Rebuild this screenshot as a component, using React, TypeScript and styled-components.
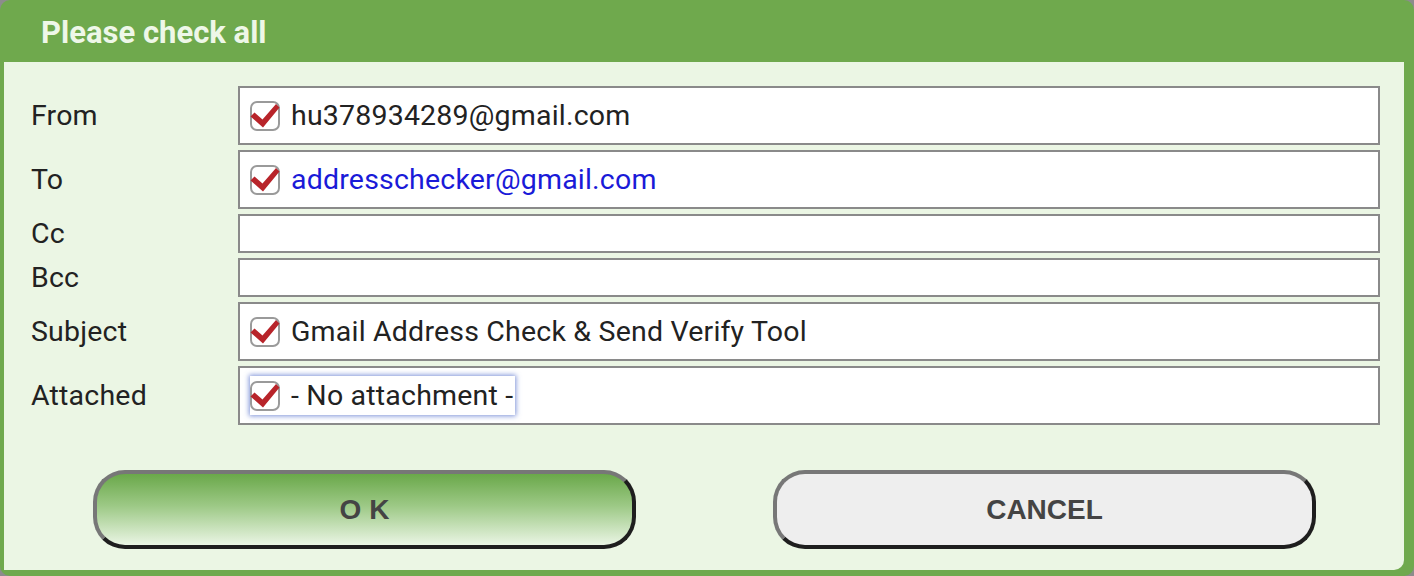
import React from 'react';
import styled, { createGlobalStyle } from 'styled-components';

const GlobalStyle = createGlobalStyle`
  html, body {
    margin: 0;
    padding: 0;
    background: #8c8c8c;
  }
  body {
    font-family: Roboto, "Liberation Sans", Arial, sans-serif;
  }
`;

const Dialog = styled.div`
  width: 1414px;
  height: 576px;
  box-sizing: border-box;
  display: flex;
  flex-direction: column;
  background: #6fa94d;
  border-radius: 10px;
  padding: 0 10px 6px 4px;
`;

const Header = styled.div`
  height: 62px;
  box-sizing: border-box;
  padding: 4px 0 0 37px;
  line-height: 58px;
  font-size: 31px;
  font-weight: 700;
  color: #eef7e8;
`;

const Panel = styled.div`
  flex: 1;
  display: flex;
  flex-direction: column;
  background: #ebf6e4;
  border-bottom-right-radius: 10px;
  padding: 24px 24px 0 27px;
`;

const Fields = styled.div`
  display: grid;
  grid-template-columns: 207px 1fr;
  row-gap: 5px;
  align-items: center;
`;

const Label = styled.div`
  font-size: 28.5px;
  letter-spacing: 0.2px;
  color: #222;
`;

// one bordered field, tall when it holds a checkbox
const Field = styled.div<{ $tall?: boolean }>`
  height: ${(p) => (p.$tall ? 59 : 39)}px;
  box-sizing: border-box;
  border: 2px solid #8a8a8a;
  background: #fff;
  display: flex;
  align-items: center;
  padding-left: 10px;
`;

const Value = styled.span<{ $blue?: boolean; $focused?: boolean }>`
  display: inline-flex;
  align-items: center;
  gap: 11px;
  font-size: 28.5px;
  letter-spacing: 0.2px;
  color: ${(p) => (p.$blue ? '#1a1ad8' : '#222')};
  padding: ${(p) => (p.$focused ? '3px 2px 3px 0' : '0')};
  box-shadow: ${(p) => (p.$focused ? '0 0 5px 1px rgba(70, 100, 200, 0.7)' : 'none')};
`;

const Buttons = styled.div`
  display: grid;
  grid-template-columns: 1fr 1fr;
  column-gap: 137px;
  padding: 0 64px 0 62px;
  margin-top: 45px;
`;

const Button = styled.button<{ $primary?: boolean }>`
  height: 79px;
  box-sizing: border-box;
  border: 4px solid;
  border-color: #777 #1e1e1e #1e1e1e #777;
  border-radius: 32px;
  background: ${(p) =>
    p.$primary
      ? 'linear-gradient(to bottom, #6aa84a 0%, #9dc986 45%, #eaf5e4 100%)'
      : '#eeeeee'};
  font-family: "Liberation Sans", Arial, sans-serif;
  font-weight: 700;
  font-size: 28px;
  color: #444;
  padding: 0;
  cursor: pointer;
`;

const CheckMark = () => (
  <svg width="30" height="30" viewBox="0 0 30 30" style={{ flex: 'none' }}>
    <rect x="1" y="1" width="28" height="28" rx="6" fill="#fff" stroke="#9a9a9a" strokeWidth="2" />
    <path d="M0.5 15.5 L4.5 11.5 L12.5 18.5 L26 3 L29.5 6.5 L13 26.5 Z" fill="#b8242a" />
  </svg>
);

const rows = [
  { label: 'From', value: 'hu378934289@gmail.com' },
  { label: 'To', value: 'addresschecker@gmail.com', blue: true },
  { label: 'Cc' },
  { label: 'Bcc' },
  { label: 'Subject', value: 'Gmail Address Check & Send Verify Tool' },
  { label: 'Attached', value: '- No attachment -', focused: true },
];

export default function App() {
  return (
    <>
      <GlobalStyle />
      <Dialog>
        <Header>Please check all</Header>
        <Panel>
          <Fields>
            {rows.map((r) => (
              <React.Fragment key={r.label}>
                <Label>{r.label}</Label>
                <Field $tall={!!r.value}>
                  {r.value && (
                    <Value $blue={r.blue} $focused={r.focused}>
                      <CheckMark />
                      {r.value}
                    </Value>
                  )}
                </Field>
              </React.Fragment>
            ))}
          </Fields>
          <Buttons>
            <Button $primary>O K</Button>
            <Button>CANCEL</Button>
          </Buttons>
        </Panel>
      </Dialog>
    </>
  );
}
